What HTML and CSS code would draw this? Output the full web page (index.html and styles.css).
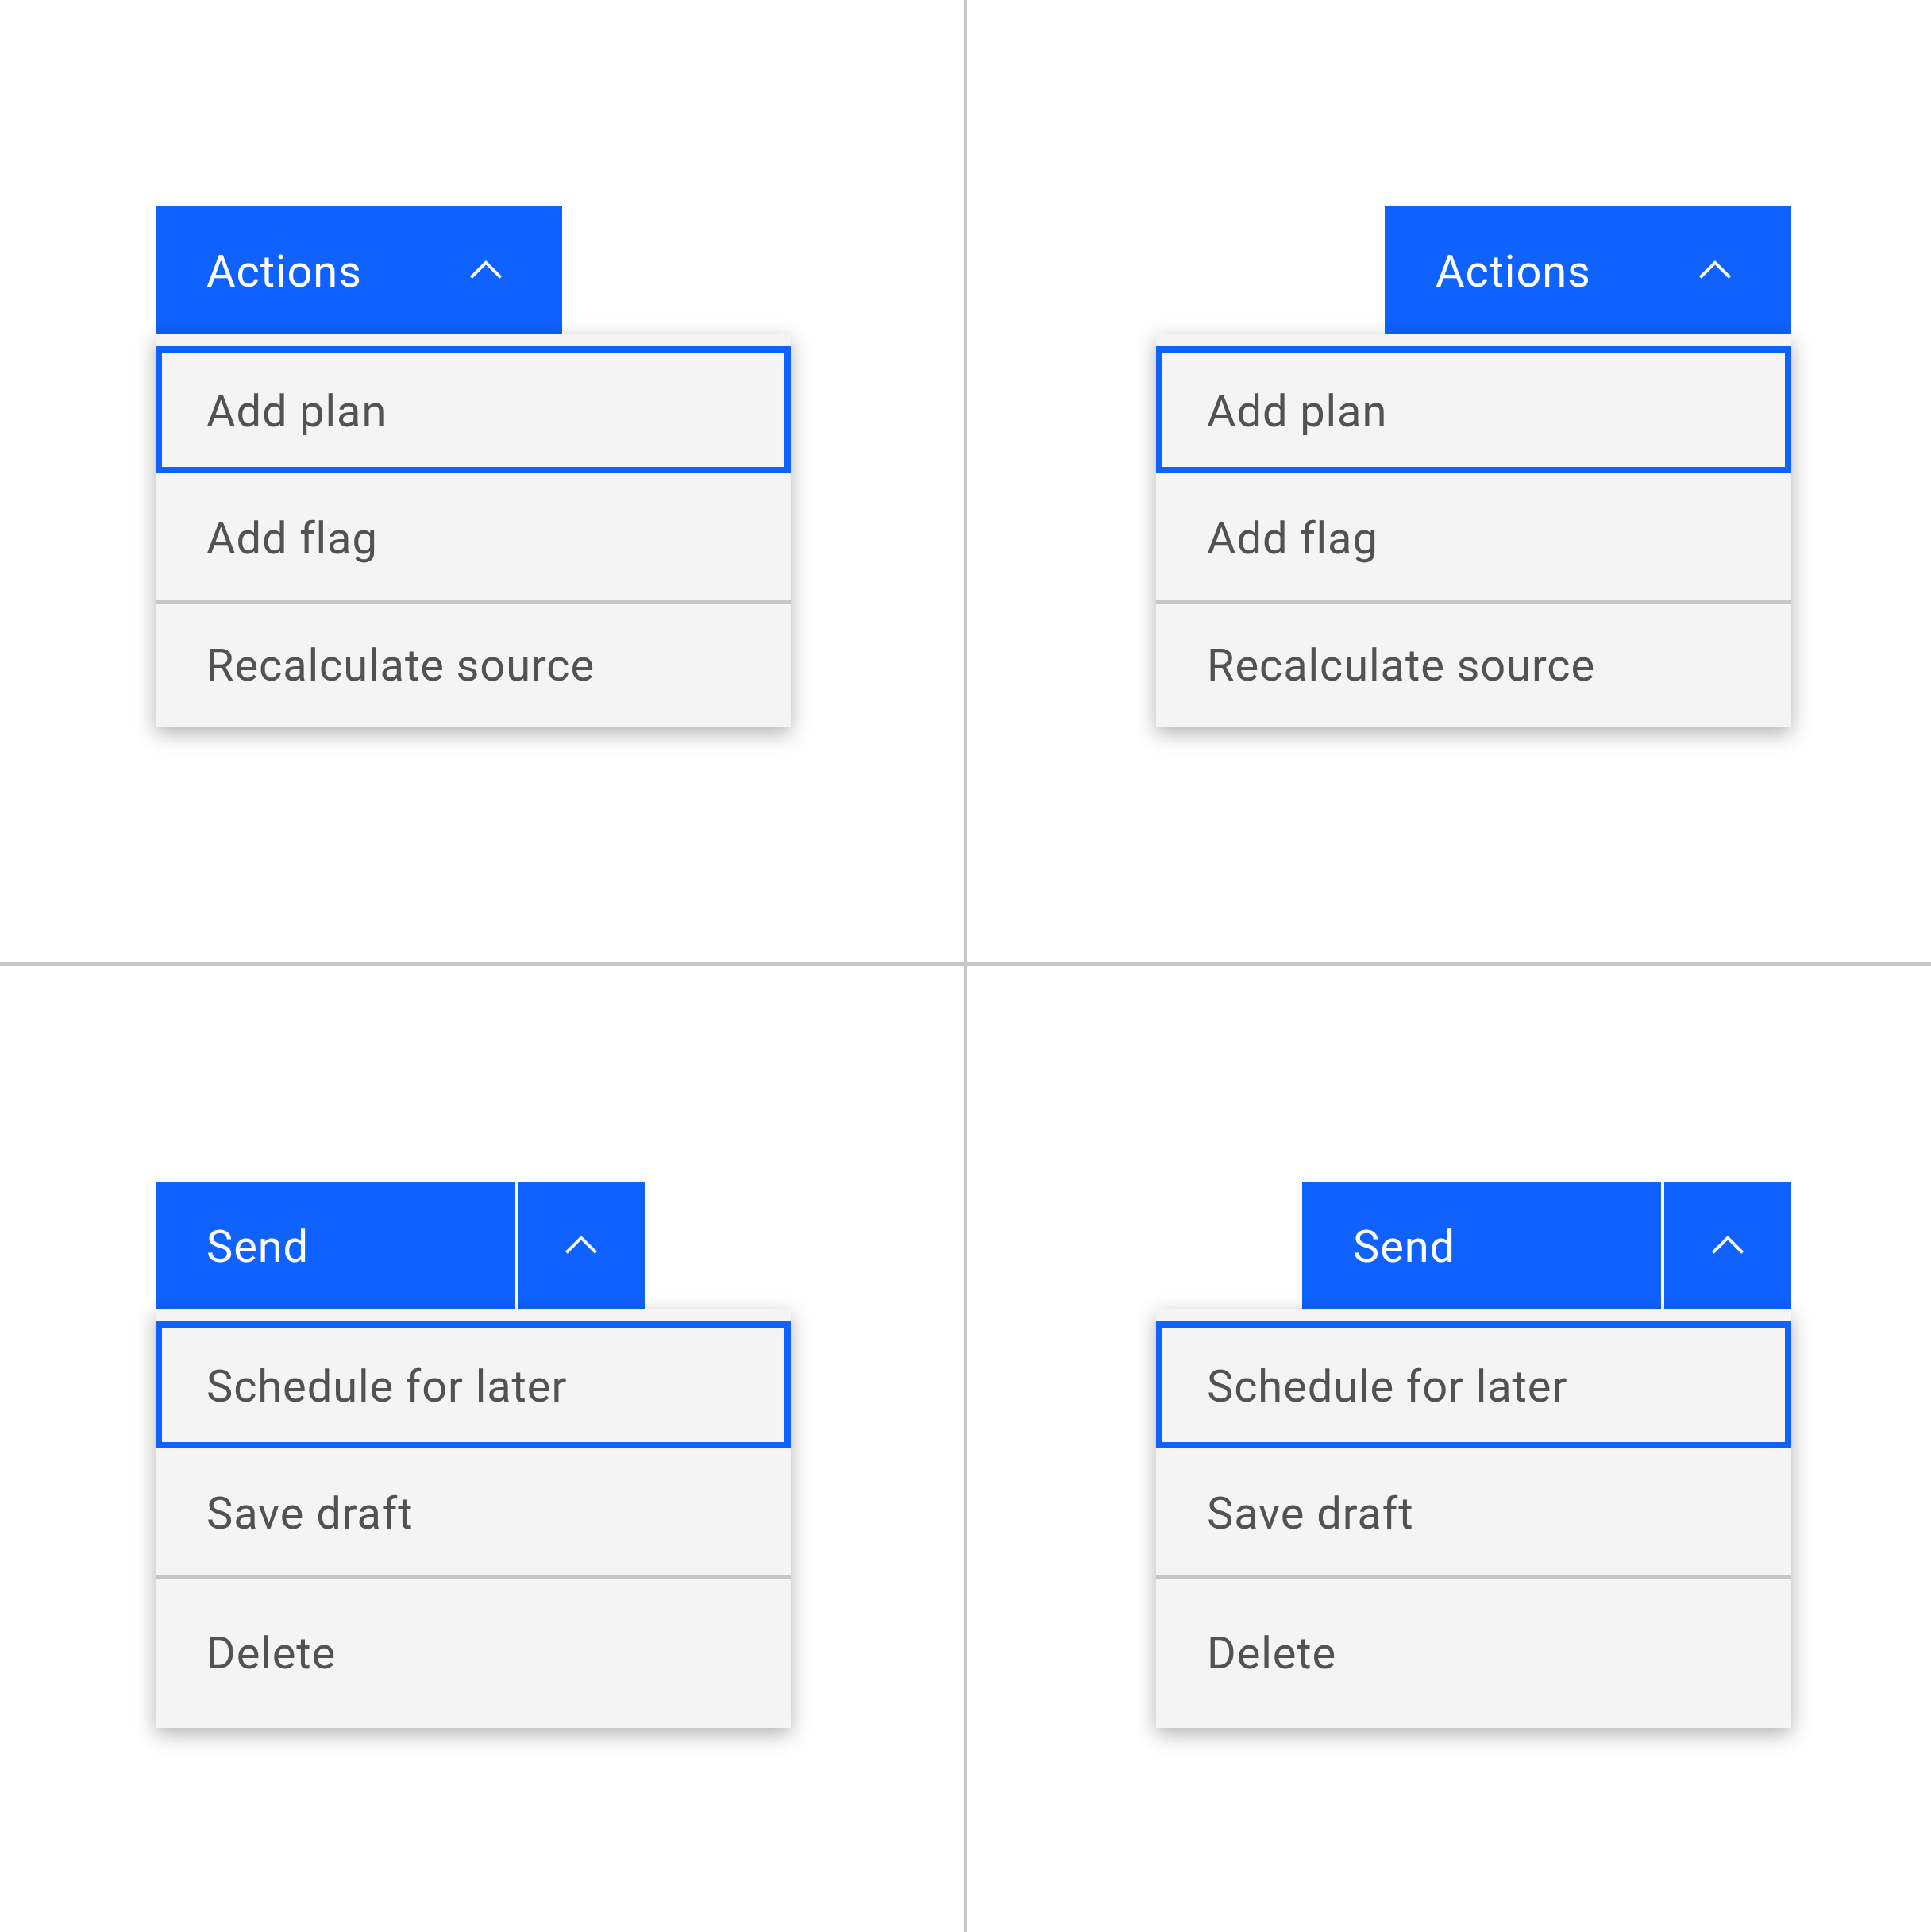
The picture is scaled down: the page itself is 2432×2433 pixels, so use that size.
FILE: index.html
```html
<!DOCTYPE html>
<html lang="en">
<head>
<meta charset="utf-8">
<title>Combo buttons</title>
<link rel="stylesheet" href="styles.css">
</head>
<body>
<div class="board">
  <section class="cell cell-top cell-start">
    <div class="combo">
      <button class="btn btn-actions"><span class="label">Actions</span><svg class="chev" viewBox="0 0 16 16" aria-hidden="true"><path d="M8 5L13 10 12.3 10.7 8 6.4 3.7 10.7 3 10z"/></svg></button>
      <ul class="menu">
        <li class="item focus"><span class="label">Add plan</span></li>
        <li class="item"><span class="label">Add flag</span></li>
        <li class="item divided"><span class="label">Recalculate source</span></li>
      </ul>
    </div>
  </section>
  <section class="cell cell-top cell-end">
    <div class="combo">
      <button class="btn btn-actions"><span class="label">Actions</span><svg class="chev" viewBox="0 0 16 16" aria-hidden="true"><path d="M8 5L13 10 12.3 10.7 8 6.4 3.7 10.7 3 10z"/></svg></button>
      <ul class="menu">
        <li class="item focus"><span class="label">Add plan</span></li>
        <li class="item"><span class="label">Add flag</span></li>
        <li class="item divided"><span class="label">Recalculate source</span></li>
      </ul>
    </div>
  </section>
  <section class="cell cell-bottom cell-start">
    <div class="combo">
      <div class="split">
        <button class="btn btn-main"><span class="label">Send</span></button>
        <button class="btn btn-trigger"><svg class="chev" viewBox="0 0 16 16" aria-hidden="true"><path d="M8 5L13 10 12.3 10.7 8 6.4 3.7 10.7 3 10z"/></svg></button>
      </div>
      <ul class="menu">
        <li class="item focus"><span class="label">Schedule for later</span></li>
        <li class="item"><span class="label">Save draft</span></li>
        <li class="item divided tall"><span class="label">Delete</span></li>
      </ul>
    </div>
  </section>
  <section class="cell cell-bottom cell-end">
    <div class="combo">
      <div class="split">
        <button class="btn btn-main"><span class="label">Send</span></button>
        <button class="btn btn-trigger"><svg class="chev" viewBox="0 0 16 16" aria-hidden="true"><path d="M8 5L13 10 12.3 10.7 8 6.4 3.7 10.7 3 10z"/></svg></button>
      </div>
      <ul class="menu">
        <li class="item focus"><span class="label">Schedule for later</span></li>
        <li class="item"><span class="label">Save draft</span></li>
        <li class="item divided tall"><span class="label">Delete</span></li>
      </ul>
    </div>
  </section>
</div>
</body>
</html>
```

FILE: styles.css
```css
html, body {
  margin: 0;
  padding: 0;
  background: #ffffff;
}

.board {
  display: grid;
  grid-template-columns: 1214px 1214px;
  grid-template-rows: 1212px 1217px;
  gap: 4px;
  width: 2432px;
  height: 2433px;
  background: #c6c6c6;
  font-family: Roboto, "Liberation Sans", sans-serif;
}

.cell {
  background: #ffffff;
  display: flex;
  flex-direction: column;
  box-sizing: border-box;
}

.cell-top { padding-top: 260px; }
.cell-bottom { padding-top: 272px; }
.cell-start { align-items: flex-start; padding-left: 196px; }
.cell-end { align-items: flex-end; padding-right: 176px; }

.combo {
  display: flex;
  flex-direction: column;
}
.cell-start .combo { align-items: flex-start; }
.cell-end .combo { align-items: flex-end; }

.label {
  display: block;
  padding-top: 3px;
  letter-spacing: 0.9px;
  white-space: nowrap;
}

.btn {
  appearance: none;
  border: 0;
  margin: 0;
  background: #0f62fe;
  color: #ffffff;
  height: 160px;
  font-family: inherit;
  font-size: 56px;
  font-weight: 400;
  display: flex;
  align-items: center;
  box-sizing: border-box;
  cursor: pointer;
}

.btn-actions {
  width: 512px;
  padding: 0 64px;
  justify-content: space-between;
}

.split {
  display: flex;
  gap: 4px;
  background: #ffffff;
}

.btn-main {
  width: 452px;
  padding: 0 64px;
}

.btn-trigger {
  width: 160px;
  padding: 0;
  justify-content: center;
}

.chev {
  width: 64px;
  height: 64px;
  fill: #ffffff;
  display: block;
  flex: none;
}

.menu {
  list-style: none;
  margin: 0;
  padding: 16px 0 0;
  width: 800px;
  background: #f4f4f4;
  box-shadow: 0 8px 24px rgba(0, 0, 0, 0.3);
  position: relative;
  z-index: 1;
}

.item {
  height: 160px;
  box-sizing: border-box;
  padding: 0 64px;
  display: flex;
  align-items: center;
  font-size: 56px;
  color: #525252;
  position: relative;
}

.item.tall { height: 192px; }

.item.focus {
  outline: 8px solid #0f62fe;
  outline-offset: -8px;
}

.item.divided::before {
  content: "";
  position: absolute;
  left: 0;
  right: 0;
  top: 0;
  height: 4px;
  background: #c6c6c6;
}
```
